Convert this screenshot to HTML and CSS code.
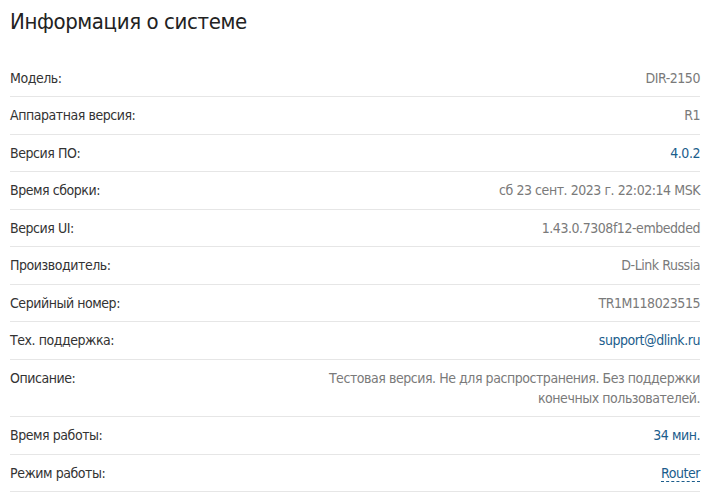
FILE: index.html
```html
<!DOCTYPE html>
<html lang="ru">
<head>
<meta charset="utf-8">
<link rel="stylesheet" href="styles.css">
</head>
<body>
<div class="page">
  <h1 class="title">Информация о системе</h1>
  <div class="list">
    <div class="row"><div class="label">Модель:</div><div class="value">DIR-2150</div></div>
    <div class="row"><div class="label">Аппаратная версия:</div><div class="value">R1</div></div>
    <div class="row"><div class="label">Версия ПО:</div><div class="value blue">4.0.2</div></div>
    <div class="row"><div class="label">Время сборки:</div><div class="value">сб 23 сент. 2023 г. 22:02:14 MSK</div></div>
    <div class="row"><div class="label">Версия UI:</div><div class="value">1.43.0.7308f12-embedded</div></div>
    <div class="row"><div class="label">Производитель:</div><div class="value">D-Link Russia</div></div>
    <div class="row"><div class="label">Серийный номер:</div><div class="value">TR1M118023515</div></div>
    <div class="row"><div class="label">Тех. поддержка:</div><div class="value blue">support@dlink.ru</div></div>
    <div class="row"><div class="label">Описание:</div><div class="value desc">Тестовая версия. Не для распространения. Без поддержки конечных пользователей.</div></div>
    <div class="row"><div class="label">Время работы:</div><div class="value blue">34 мин.</div></div>
    <div class="row"><div class="label">Режим работы:</div><div class="value"><span class="link">Router</span></div></div>
  </div>
</div>
</body>
</html>
```
FILE: styles.css
```css
html, body {
  margin: 0;
  padding: 0;
  background: #fff;
}
body {
  font-family: "DejaVu Sans Condensed", "DejaVu Sans", sans-serif;
  color: #333;
}
.page {
  width: 690px;
  padding: 0 12px 0 10px;
}
.title {
  margin: 0;
  padding-top: 8px;
  height: 59.5px;
  box-sizing: border-box;
  font-size: 22px;
  font-weight: normal;
  line-height: 28px;
  letter-spacing: -0.4px;
  color: #222;
}
.row {
  display: flex;
  justify-content: space-between;
  align-items: flex-start;
  gap: 20px;
  padding: 8.25px 0;
  border-bottom: 1px solid #e6e6e6;
  font-size: 14px;
  line-height: 20px;
  letter-spacing: -0.45px;
}
.label {
  flex: none;
  color: #333;
}
.value {
  text-align: right;
  color: #7a7a7a;
}
.desc {
  max-width: 372px;
}
.blue {
  color: #1b5d8c;
}
.link {
  color: #1b5d8c;
  border-bottom: 1px dashed #1b5d8c;
}
```
